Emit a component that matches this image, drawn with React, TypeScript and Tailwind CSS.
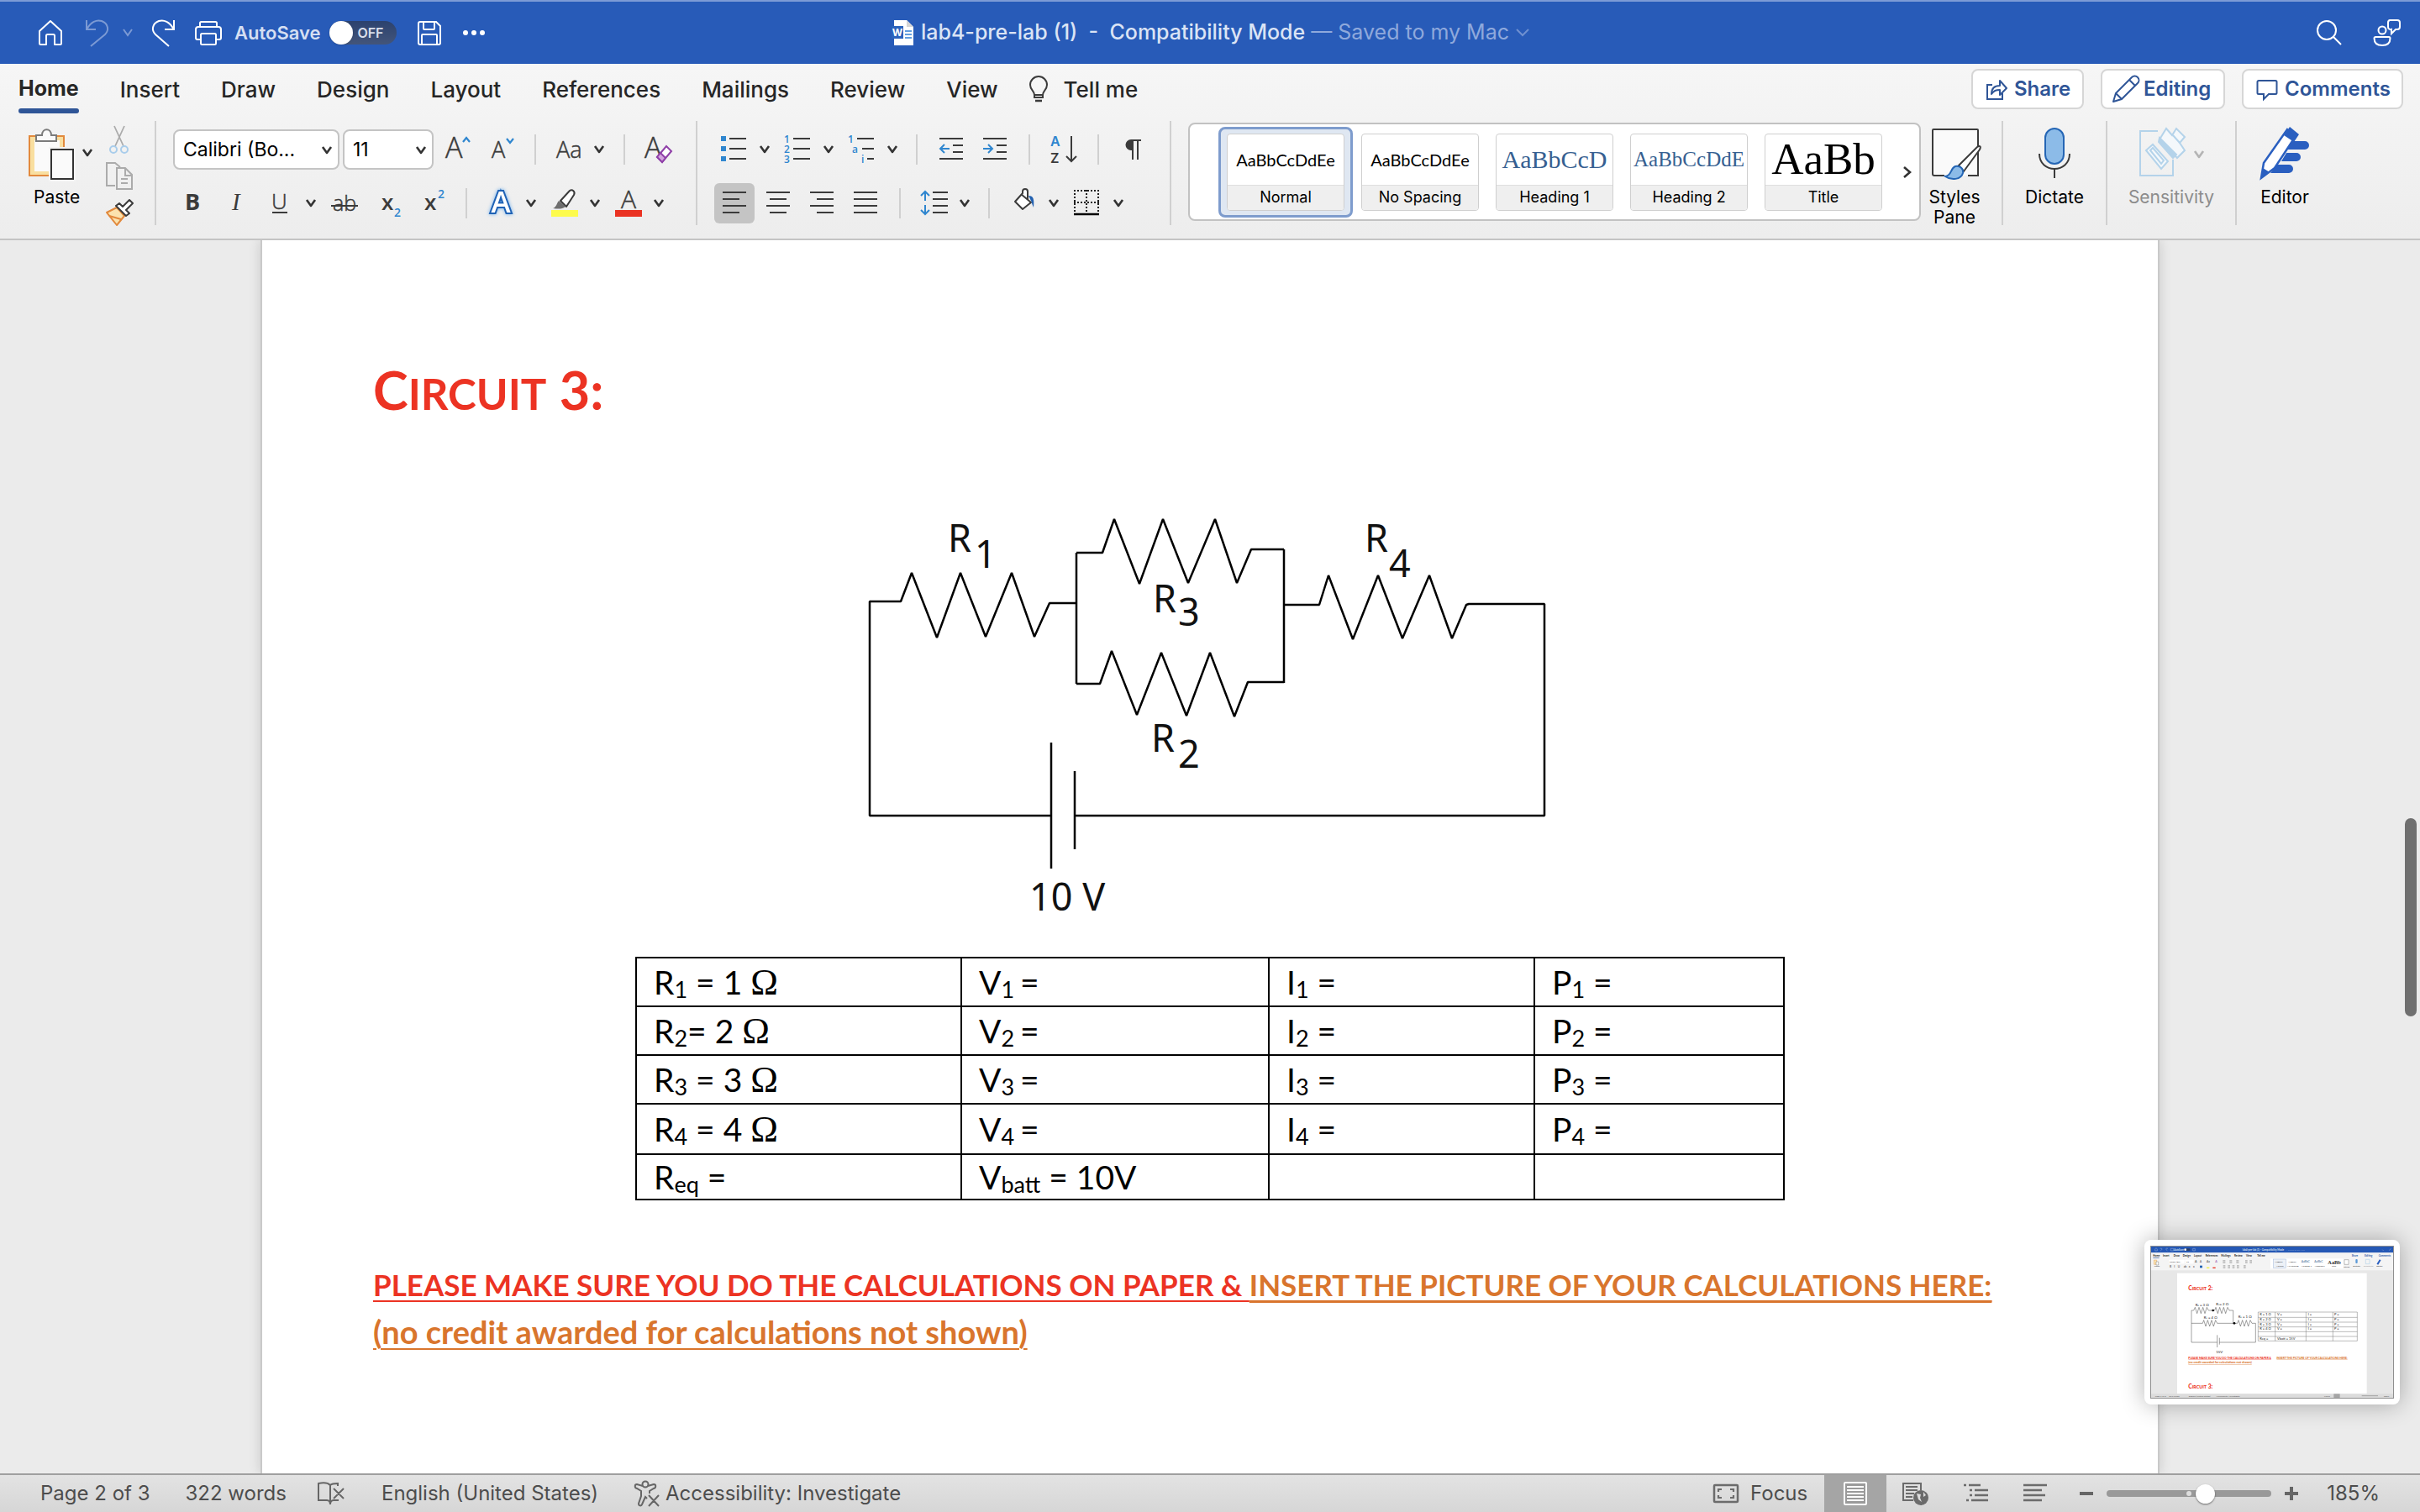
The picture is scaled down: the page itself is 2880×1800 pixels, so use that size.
import type { ReactNode } from 'react';

const INK = '#3b3b3b';
const BLUE = '#2f86cf';

/* ---------- shared pieces ---------- */

type IconProps = { w: number; h?: number; children: ReactNode; className?: string };

function Icon({ w, h = 48, children, className = '' }: IconProps) {
  return (
    <svg width={w} height={h} viewBox={`0 0 ${w} ${h}`} fill="none" className={`shrink-0 overflow-visible ${className}`} aria-hidden="true">
      {children}
    </svg>
  );
}

function Tool({ label, className = '', children }: { label: string; className?: string; children: ReactNode }) {
  return (
    <button type="button" aria-label={label} className={`flex shrink-0 items-center justify-center ${className}`}>
      {children}
    </button>
  );
}

function Chevron({ color = '#333' }: { color?: string }) {
  return (
    <Icon w={14} h={12}>
      <path d="M2 2l5 7 5-7" stroke={color} strokeWidth="2.6" strokeLinejoin="round" />
    </Icon>
  );
}

function More({ label, className = '' }: { label: string; className?: string }) {
  return (
    <Tool label={label} className={`h-12 ${className}`}>
      <Chevron />
    </Tool>
  );
}

const GroupLine = () => <div className="h-[124px] w-[2px] shrink-0 bg-[#d0d0d0]" />;
const RowLine = ({ className = '' }: { className?: string }) => (
  <div className={`h-9 w-[2px] shrink-0 bg-[#d0d0d0] ${className}`} />
);

/* ---------- title bar ---------- */

function TitleBar() {
  return (
    <header className="grid h-[76px] shrink-0 grid-cols-[1fr_auto_1fr] items-center border-t-2 border-[#7d9bd6] bg-[#285bb8] text-white">
      <div className="flex items-center pl-[44px]">
        <Tool label="Home">
          <Icon w={32} h={32}>
            <path d="M3 14L16 2l13 12v14.5a1.5 1.5 0 0 1-1.5 1.5H21V19.5a1.5 1.5 0 0 0-1.5-1.5h-7a1.5 1.5 0 0 0-1.5 1.5V30H4.5A1.5 1.5 0 0 1 3 28.5z" stroke="#fff" strokeWidth="2" strokeLinejoin="round" />
          </Icon>
        </Tool>
        <Tool label="Undo" className="ml-[25px]">
          <Icon w={30} h={34}>
            <path d="M2 2v11h11M2.5 12.5C7 4 14 1 20 3c8 3 9 11 4 16L7 33" stroke="#7c9ad4" strokeWidth="2" />
          </Icon>
        </Tool>
        <Tool label="Undo history" className="ml-[14px]">
          <Icon w={14} h={12}>
            <path d="M2 2l5 7 5-7" stroke="#7c9ad4" strokeWidth="2" />
          </Icon>
        </Tool>
        <Tool label="Redo" className="ml-[20px]">
          <Icon w={30} h={34}>
            <path d="M28 2v11H17M27.5 12.5C23 4 16 1 10 3c-8 3-9 11-4 16l16 14" stroke="#fff" strokeWidth="2" />
          </Icon>
        </Tool>
        <Tool label="Print" className="ml-[22px]">
          <Icon w={34} h={32}>
            <path d="M7 9V4.5A1.5 1.5 0 0 1 8.5 3h17A1.5 1.5 0 0 1 27 4.5V9M8 24H4a2 2 0 0 1-2-2V12a3 3 0 0 1 3-3h24a3 3 0 0 1 3 3v10a2 2 0 0 1-2 2h-4" stroke="#fff" strokeWidth="2" />
            <rect x="8" y="17" width="18" height="13" rx="1.5" stroke="#fff" strokeWidth="2" />
          </Icon>
        </Tool>
        <label className="ml-[14px] flex items-center text-[22px] font-semibold text-[#d5dff2]">
          AutoSave
          <span className="relative ml-[10px] flex items-center">
            <input
              type="checkbox"
              role="switch"
              className="h-7 w-20 appearance-none rounded-full bg-linear-to-b from-[#2c426e] to-[#43557a] before:block before:size-7 before:rounded-full before:bg-white before:shadow"
            />
            <span className="pointer-events-none absolute right-[15px] text-[16px] font-semibold text-[#d9dfea]">OFF</span>
          </span>
        </label>
        <Tool label="Save" className="ml-[24px]">
          <Icon w={30} h={32}>
            <path d="M4 3h19l5 5v20a2 2 0 0 1-2 2H4a2 2 0 0 1-2-2V5a2 2 0 0 1 2-2z" stroke="#fff" strokeWidth="2" />
            <path d="M8 3v8a1 1 0 0 0 1 1h11a1 1 0 0 0 1-1V3M6 30V19a1 1 0 0 1 1-1h16a1 1 0 0 1 1 1v11" stroke="#fff" strokeWidth="2" />
          </Icon>
        </Tool>
        <Tool label="More commands" className="ml-[24px]">
          <Icon w={28} h={8}>
            <circle cx="4" cy="4" r="3" fill="#fff" />
            <circle cx="14" cy="4" r="3" fill="#fff" />
            <circle cx="24" cy="4" r="3" fill="#fff" />
          </Icon>
        </Tool>
      </div>

      <div className="flex items-center whitespace-pre text-[25px] font-medium text-[#dbe4f5]">
        <Icon w={28} h={30}>
          <path d="M4 0h15l8 8v22H4z" fill="#fff" />
          <path d="M19 0v8h8z" fill="#d5d5d5" />
          <path d="M17 13h8M17 17h8M17 21h8" stroke="#2f7fd6" strokeWidth="1.5" />
          <rect x="1" y="7" width="14" height="15" fill="#2b63bd" />
          <text x="8" y="19" textAnchor="middle" fontSize="12" fontWeight="700" fill="#fff">W</text>
        </Icon>
        <h1 className="ml-2">lab4-pre-lab (1)  -  Compatibility Mode</h1>
        <button type="button" className="flex items-center gap-2 font-normal text-[#8fa9dc]">
          <span> — Saved to my Mac</span>
          <Icon w={16} h={10}>
            <path d="M1 1l7 7 7-7" stroke="#6f90d0" strokeWidth="2" />
          </Icon>
        </button>
      </div>

      <div className="flex items-center justify-end gap-[36px] pr-[22px]">
        <Tool label="Search">
          <Icon w={32} h={32}>
            <circle cx="13" cy="13" r="11" stroke="#fff" strokeWidth="2" />
            <path d="M21 21l9 9" stroke="#fff" strokeWidth="2" />
          </Icon>
        </Tool>
        <Tool label="Feedback">
          <Icon w={34} h={34}>
            <circle cx="11" cy="14" r="4.5" stroke="#fff" strokeWidth="2" />
            <path d="M3 22h16a1.5 1.5 0 0 1 1.5 1.5C20.5 29 17 32 11 32S1.5 29 1.5 23.5A1.5 1.5 0 0 1 3 22z" stroke="#fff" strokeWidth="2" />
            <path d="M20 2h9a3 3 0 0 1 3 3v5a3 3 0 0 1-3 3h-2l-5 5v-5a3 3 0 0 1-4-3V5a3 3 0 0 1 2-3z" stroke="#fff" strokeWidth="2" />
          </Icon>
        </Tool>
      </div>
    </header>
  );
}

/* ---------- tabs ---------- */

const tabs = ['Insert', 'Draw', 'Design', 'Layout', 'References', 'Mailings', 'Review', 'View'];

function Tabs() {
  return (
    <nav className="flex h-[60px] items-center pl-[22px] pr-5 text-[26px] font-medium text-[#262626]">
      <div className="flex gap-[49px]">
        <button type="button" className="relative text-[25px] font-bold">
          Home
          <span className="absolute inset-x-0 -bottom-[9px] h-[6px] rounded-full bg-[#2f5597]" />
        </button>
        {tabs.map((tab) => (
          <button key={tab} type="button">{tab}</button>
        ))}
      </div>
      <button type="button" className="ml-[36px] flex items-center gap-[18px]">
        <Icon w={24} h={32}>
          <path d="M7 23c0-5-5-6-5-12a10 10 0 0 1 20 0c0 6-5 7-5 12v3H7zM7 23h10" stroke={INK} strokeWidth="2" />
          <path d="M8 30h8" stroke={INK} strokeWidth="2.5" />
        </Icon>
        Tell me
      </button>
      <div className="ml-auto flex gap-5 text-[24px] font-semibold text-[#2f5597]">
        <button type="button" className="flex h-12 w-[134px] items-center gap-2 rounded-lg border-2 border-[#d6d6d6] bg-white pl-[15px]">
          <Icon w={26} h={28}>
            <path d="M8 9H2v17h18v-7" stroke="#2f5597" strokeWidth="2" />
            <path d="M7 20c0-7 4-10 10-10V4l8 9-8 8v-6c-5 0-7 1-10 5z" stroke="#2f5597" strokeWidth="2" strokeLinejoin="round" />
          </Icon>
          Share
        </button>
        <button type="button" className="flex h-12 w-[148px] items-center gap-1 rounded-lg border-2 border-[#d6d6d6] bg-white pl-[11px]">
          <Icon w={34} h={34}>
            <path d="M2 32l3-10L24 3a4.500 4.500 0 0 1 7 7L12 29zM5 22l7 7M21 6l7 7" stroke="#2f5597" strokeWidth="2" strokeLinejoin="round" />
          </Icon>
          Editing
        </button>
        <button type="button" className="flex h-12 w-[192px] items-center gap-[8px] rounded-lg border-2 border-[#d6d6d6] bg-white pl-[15px]">
          <Icon w={26} h={28}>
            <path d="M3 4h20a1.5 1.5 0 0 1 1.5 1.5v13A1.5 1.5 0 0 1 23 20h-8l-6 6v-6H3a1.5 1.5 0 0 1-1.5-1.5v-13A1.5 1.5 0 0 1 3 4z" stroke="#2f5597" strokeWidth="2" />
          </Icon>
          Comments
        </button>
      </div>
    </nav>
  );
}

/* ---------- ribbon groups ---------- */

function ClipboardGroup() {
  return (
    <div className="flex h-[124px] w-[184px] shrink-0 pl-[34px]">
      <div className="flex w-[78px] flex-col items-start">
        <div className="flex items-center">
          <Tool label="Paste" className="mt-2">
            <Icon w={56} h={64}>
              <rect x="1" y="10" width="41" height="47" fill="#f9dfa0" stroke="#e2893c" strokeWidth="2" />
              <rect x="7" y="15" width="30" height="37" fill="#fafafa" />
              <path d="M9 16V9h7c0-9 11-9 11 0h6v7z" fill="#fafafa" stroke="#7b7b7b" strokeWidth="2" />
              <rect x="24" y="23" width="32" height="41" fill="#f4f4f4" />
              <rect x="27" y="26" width="26" height="35" fill="#fafafa" stroke="#333" strokeWidth="2" />
            </Icon>
          </Tool>
          <Tool label="Paste options" className="ml-[7px] mt-1">
            <Chevron />
          </Tool>
        </div>
        <span className="ml-[6px] mt-[7px] text-[21px] leading-6 text-black">Paste</span>
      </div>
      <div className="ml-[13px] flex flex-col gap-[10px] pt-[5px]">
        <Tool label="Cut">
          <Icon w={34} h={34}>
            <path d="M11 1l11 24M23 1L12 25" stroke="#ababab" strokeWidth="1.8" />
            <circle cx="10" cy="29" r="4" stroke="#a9cdeb" strokeWidth="2" />
            <circle cx="23" cy="29" r="4" stroke="#a9cdeb" strokeWidth="2" />
          </Icon>
        </Tool>
        <Tool label="Copy">
          <Icon w={34} h={34}>
            <path d="M12 28H2V1h10l6 5M14 7h10l8 8v17H14zM24 7v9h8M19 20h8M19 25h8" stroke="#ababab" strokeWidth="2" />
          </Icon>
        </Tool>
        <Tool label="Format Painter">
          <Icon w={34} h={34}>
            <path d="M2 16l12-6 9 10-9 11z" fill="#fbe3ae" stroke="#e2893c" strokeWidth="2" strokeLinejoin="round" />
            <path d="M5 20l14 4" stroke="#e2893c" strokeWidth="2" />
            <path d="M13 8l4-3 4 4 8-8 4 4-8 8 4 4-4 3z" fill="#fff" stroke={INK} strokeWidth="2" strokeLinejoin="round" />
          </Icon>
        </Tool>
      </div>
    </div>
  );
}

function Picker({ label, value, className }: { label: string; value: string; className: string }) {
  return (
    <div className={`relative h-12 shrink-0 ${className}`}>
      <select aria-label={label} className="size-full appearance-none rounded-lg border-2 border-[#c4c4c4] bg-white pl-[10px] text-[23px] text-black">
        <option>{value}</option>
      </select>
      <span className="pointer-events-none absolute right-[8px] top-[19px]">
        <Chevron />
      </span>
    </div>
  );
}

function FontGroup() {
  return (
    <div className="flex h-[124px] w-[642px] shrink-0 flex-col gap-4 pl-[20px] pt-[10px]">
      <div className="flex items-center">
        <Picker label="Font" value="Calibri (Bo..." className="w-[198px]" />
        <Picker label="Font size" value="11" className="ml-1 w-[108px]" />
        <Tool label="Increase font size" className="ml-[14px]">
          <Icon w={32}>
            <text x="0" y="34" fontSize="34" fontFamily="Open Sans" fontWeight="300" fill={INK} stroke={INK} strokeWidth="0.5">A</text>
            <path d="M21 15l4-5 4 5" stroke={BLUE} strokeWidth="2.2" />
          </Icon>
        </Tool>
        <Tool label="Decrease font size" className="ml-[23px]">
          <Icon w={30}>
            <text x="0" y="34" fontSize="27" fontFamily="Open Sans" fontWeight="300" fill={INK} stroke={INK} strokeWidth="0.5">A</text>
            <path d="M18 11l4 5 4-5" stroke={BLUE} strokeWidth="2.2" />
          </Icon>
        </Tool>
        <RowLine className="ml-[21px]" />
        <Tool label="Change case" className="ml-[24px]">
          <Icon w={34}>
            <text x="0" y="34" fontSize="27" fontFamily="Open Sans" fontWeight="300" fill={INK} stroke={INK} strokeWidth="0.5">Aa</text>
          </Icon>
        </Tool>
        <More label="Case options" className="ml-[10px]" />
        <RowLine className="ml-[22px]" />
        <Tool label="Clear formatting" className="ml-[23px]">
          <Icon w={34}>
            <text x="0" y="34" fontSize="34" fontFamily="Open Sans" fontWeight="300" fill={INK} stroke={INK} strokeWidth="0.5">A</text>
            <path d="M15 33L26 20l6 6-11 13z" fill="#fff" stroke="#8f3fa8" strokeWidth="2" />
            <path d="M15 33l4-5 6 6-4 5z" fill="#d3a5de" stroke="#8f3fa8" strokeWidth="2" />
          </Icon>
        </Tool>
      </div>

      <div className="flex items-center">
        <Tool label="Bold" className="ml-[14px]">
          <Icon w={20}>
            <text x="0" y="32" fontSize="27" fontFamily="Open Sans" fontWeight="700" fill={INK}>B</text>
          </Icon>
        </Tool>
        <Tool label="Italic" className="ml-[34px]">
          <Icon w={20}>
            <text x="2" y="32" fontSize="29" fontFamily="Liberation Serif" fontStyle="italic" fill={INK}>I</text>
          </Icon>
        </Tool>
        <Tool label="Underline" className="ml-[28px]">
          <Icon w={22}>
            <text x="1" y="31" fontSize="26" fontFamily="Open Sans" fontWeight="300" fill={INK} stroke={INK} strokeWidth="0.5">U</text>
            <path d="M2 35h18" stroke={INK} strokeWidth="2" />
          </Icon>
        </Tool>
        <More label="Underline options" className="ml-[19px]" />
        <Tool label="Strikethrough" className="ml-[16px]">
          <Icon w={34}>
            <text x="3" y="33" fontSize="25" fontFamily="Open Sans" fontWeight="300" fill={INK} stroke={INK} strokeWidth="0.5">ab</text>
            <path d="M1 27h32" stroke={INK} strokeWidth="2" />
          </Icon>
        </Tool>
        <Tool label="Subscript" className="ml-[27px]">
          <Icon w={24}>
            <text x="0" y="32" fontSize="26" fontFamily="Open Sans" fontWeight="600" fill={INK}>x</text>
            <text x="15" y="40" fontSize="14" fontFamily="Open Sans" fontWeight="600" fill={BLUE}>2</text>
          </Icon>
        </Tool>
        <Tool label="Superscript" className="ml-[27px]">
          <Icon w={26}>
            <text x="0" y="32" fontSize="26" fontFamily="Open Sans" fontWeight="600" fill={INK}>x</text>
            <text x="16" y="18" fontSize="14" fontFamily="Open Sans" fontWeight="600" fill={BLUE}>2</text>
          </Icon>
        </Tool>
        <RowLine className="ml-[23px]" />
        <Tool label="Text effects" className="ml-[23px]">
          <Icon w={34}>
            <text
              x="17"
              y="35"
              textAnchor="middle"
              fontSize="35"
              fontFamily="Open Sans"
              fontWeight="600"
              fill="#fff"
              stroke="#1f62b5"
              strokeWidth="4"
              paintOrder="stroke"
              className="drop-shadow-[0_0_2px_#6fb0ee]"
            >
              A
            </text>
          </Icon>
        </Tool>
        <More label="Effect options" className="ml-[12px]" />
        <Tool label="Highlight" className="ml-[16px]">
          <Icon w={34}>
            <path d="M12 21L23 9c3-2 7 1 5 5l-9 14z" fill="#fff" stroke={INK} strokeWidth="2" strokeLinejoin="round" />
            <path d="M3 30c4-1 5-7 7-9l8 7c-4 3-8 3-15 2z" fill="#6e6e6e" />
            <rect x="1" y="32" width="32" height="8" fill="#fdfb4d" />
          </Icon>
        </Tool>
        <More label="Highlight options" className="ml-[12px]" />
        <Tool label="Font color" className="ml-[16px]">
          <Icon w={34}>
            <text x="17" y="30" textAnchor="middle" fontSize="30" fontFamily="Open Sans" fontWeight="300" fill={INK} stroke={INK} strokeWidth="0.5">A</text>
            <rect x="1" y="32" width="32" height="8" fill="#ea3323" />
          </Icon>
        </Tool>
        <More label="Color options" className="ml-[12px]" />
      </div>
    </div>
  );
}

function ParagraphGroup() {
  return (
    <div className="flex h-[124px] w-[562px] shrink-0 flex-col gap-4 pt-[10px]">
      <div className="flex items-center">
        <Tool label="Bullets" className="ml-[27px]">
          <Icon w={32}>
            <path d="M11 11h20M11 23h20M11 35h20" stroke={INK} strokeWidth="2" />
            <path d="M1 8h6v6H1zM1 20h6v6H1zM1 32h6v6H1z" fill={BLUE} />
          </Icon>
        </Tool>
        <More label="Bullet options" className="ml-[14px]" />
        <Tool label="Numbering" className="ml-[16px]">
          <Icon w={32}>
            <path d="M11 11h20M11 23h20M11 35h20" stroke={INK} strokeWidth="2" />
            <g fontSize="12" fontWeight="600" fontFamily="Open Sans" fill={BLUE}>
              <text x="0" y="16">1</text>
              <text x="0" y="28">2</text>
              <text x="0" y="40">3</text>
            </g>
          </Icon>
        </Tool>
        <More label="Numbering options" className="ml-[14px]" />
        <Tool label="Multilevel list" className="ml-[16px]">
          <Icon w={32}>
            <path d="M11 11h20M17 23h14M23 35h8" stroke={INK} strokeWidth="2" />
            <g fontSize="12" fontWeight="600" fontFamily="Open Sans" fill={BLUE}>
              <text x="0" y="16">1</text>
              <text x="5" y="28">a</text>
              <text x="16" y="40">i</text>
            </g>
          </Icon>
        </Tool>
        <More label="Multilevel options" className="ml-[14px]" />
        <RowLine className="ml-[21px]" />
        <Tool label="Decrease indent" className="ml-[24px]">
          <Icon w={32}>
            <path d="M2 11h28M18 19h12M18 27h12M2 35h28" stroke={INK} strokeWidth="2" />
            <path d="M3 23h11M8 18l-5 5 5 5" stroke={BLUE} strokeWidth="2" />
          </Icon>
        </Tool>
        <Tool label="Increase indent" className="ml-[21px]">
          <Icon w={32}>
            <path d="M1 11h28M17 19h12M17 27h12M1 35h28" stroke={INK} strokeWidth="2" />
            <path d="M1 23h11M7 18l5 5-5 5" stroke={BLUE} strokeWidth="2" />
          </Icon>
        </Tool>
        <RowLine className="ml-[23px]" />
        <Tool label="Sort" className="ml-[23px]">
          <Icon w={34}>
            <text x="1" y="20" fontSize="16" fontFamily="Inter" fontWeight="600" fill={BLUE}>A</text>
            <text x="1" y="40" fontSize="16" fontFamily="Inter" fontWeight="600" fill={INK}>Z</text>
            <path d="M26 8v30M20 32l6 6 6-6" stroke={INK} strokeWidth="2" />
          </Icon>
        </Tool>
        <RowLine className="ml-[23px]" />
        <Tool label="Show formatting marks" className="ml-[28px]">
          <Icon w={24}>
            <path d="M10 13h12M12 12v24M18 12v24" stroke={INK} strokeWidth="2" />
            <path d="M12 12v13h-2a6.5 6.5 0 0 1 0-13z" fill={INK} />
          </Icon>
        </Tool>
      </div>

      <div className="flex items-center">
        <Tool label="Align left" className="ml-[20px] size-12 rounded-md bg-[#c4c4c4]">
          <Icon w={28}>
            <path d="M0 11h28M0 19h20M0 27h28M0 35h20" stroke={INK} strokeWidth="2" />
          </Icon>
        </Tool>
        <Tool label="Align center" className="ml-1 size-12">
          <Icon w={28}>
            <path d="M0 11h28M4 19h20M0 27h28M4 35h20" stroke={INK} strokeWidth="2" />
          </Icon>
        </Tool>
        <Tool label="Align right" className="ml-1 size-12">
          <Icon w={28}>
            <path d="M0 11h28M8 19h20M0 27h28M8 35h20" stroke={INK} strokeWidth="2" />
          </Icon>
        </Tool>
        <Tool label="Justify" className="ml-1 size-12">
          <Icon w={28}>
            <path d="M0 11h28M0 19h28M0 27h28M0 35h28" stroke={INK} strokeWidth="2" />
          </Icon>
        </Tool>
        <RowLine className="ml-[16px]" />
        <Tool label="Line spacing" className="ml-[23px]">
          <Icon w={34}>
            <path d="M15 11h18M15 19h18M15 27h18M15 35h18" stroke={INK} strokeWidth="2" />
            <path d="M6 10v11M1 15l5-5 5 5M6 26v11M1 32l5 5 5-5" stroke={BLUE} strokeWidth="2" />
          </Icon>
        </Tool>
        <More label="Spacing options" className="ml-[12px]" />
        <RowLine className="ml-[21px]" />
        <Tool label="Shading" className="ml-[27px]">
          <Icon w={30}>
            <path d="M10 13l12 10-10 8-9-9 9-10V10a3 3 0 0 1 6 0v10" fill="#fff" stroke={INK} strokeWidth="2" strokeLinejoin="round" />
            <path d="M19 15c6 0 7 4 6 14-2-4-2-6-3-8z" fill="#2361b0" />
          </Icon>
        </Tool>
        <More label="Shading options" className="ml-[12px]" />
        <Tool label="Borders" className="ml-[16px]">
          <Icon w={32}>
            <path d="M1 9h30M1 23h30M2 8v30M16 8v30M30 8v30" stroke="#222" strokeWidth="2" strokeDasharray="2 2" />
            <path d="M1 37h30" stroke="#000" strokeWidth="2.5" />
          </Icon>
        </Tool>
        <More label="Border options" className="ml-[15px]" />
      </div>
    </div>
  );
}

const styleTiles = [
  { name: 'Normal', sample: 'AaBbCcDdEe', look: "font-['Lato',sans-serif] text-[20px] text-black" },
  { name: 'No Spacing', sample: 'AaBbCcDdEe', look: "font-['Lato',sans-serif] text-[20px] text-black" },
  { name: 'Heading 1', sample: 'AaBbCcD', look: "font-['Liberation_Serif',serif] text-[30px] text-[#365f91]" },
  { name: 'Heading 2', sample: 'AaBbCcDdE', look: "font-['Liberation_Serif',serif] text-[25px] text-[#365f91]" },
  { name: 'Title', sample: 'AaBb', look: "font-['Liberation_Serif',serif] text-[53px] text-black" },
];

function StyleGallery() {
  return (
    <div className="ml-[20px] mt-[2px] flex h-[117px] min-w-0 flex-1 items-center overflow-hidden rounded-lg border-2 border-[#c2c2c2] bg-white pl-[34px]">
      {styleTiles.map((tile, i) => (
        <button
          key={tile.name}
          type="button"
          className={`flex h-[108px] w-40 shrink-0 items-center justify-center rounded-lg border-[3px] ${i === 0 ? 'border-[#7e9ccd] bg-[#dfe7f2]' : 'border-transparent'}`}
        >
          <span className="flex h-[92px] w-[140px] flex-col overflow-hidden rounded-[4px] border border-[#cfcfcf] bg-white">
            <span className={`flex flex-1 items-center justify-center leading-none ${tile.look}`}>{tile.sample}</span>
            <span className="h-[30px] border-t border-[#dedede] bg-[#efefef] text-[18px] leading-[27px] text-black">{tile.name}</span>
          </span>
        </button>
      ))}
      <Tool label="More styles" className="ml-auto pr-[8px]">
        <Icon w={12} h={16}>
          <path d="M2 2l7 6-7 6" stroke="#333" strokeWidth="2.6" />
        </Icon>
      </Tool>
    </div>
  );
}

function BigTools() {
  return (
    <div className="flex shrink-0 text-[21px] leading-6 text-black">
      <button type="button" className="mr-3 flex w-[84px] flex-col items-center gap-[7px] pt-2">
        <Icon w={60} h={64}>
          <path d="M44 57h12V3a1 1 0 0 0-1-1H3a1 1 0 0 0-1 1v52a2 2 0 0 0 2 2h12" fill="#fafafa" stroke={INK} strokeWidth="2" />
          <path d="M33 45L55 23c3-2 5-1 3 3L39 52z" fill="#fff" stroke={INK} strokeWidth="2" />
          <path d="M17 58c8-1 6-10 12-12 6-1 10 3 9 8-2 8-14 9-21 4z" fill="#8cbbe8" stroke="#2566b5" strokeWidth="2" />
        </Icon>
        <span className="-ml-1 w-[70px]">Styles Pane</span>
      </button>
      <GroupLine />
      <button type="button" className="flex w-[122px] flex-col items-center gap-[7px] pt-2">
        <Icon w={42} h={64}>
          <rect x="10" y="1" width="22" height="42" rx="11" fill="#8cbbe8" stroke="#2566b5" strokeWidth="2" />
          <path d="M3 31c0 24 36 24 36 0M21 49v11" stroke={INK} strokeWidth="2" />
        </Icon>
        Dictate
      </button>
      <GroupLine />
      <button type="button" disabled className="flex w-[152px] flex-col items-center gap-[7px] pt-2 text-[#8c8c8c]">
        <span className="flex items-center gap-2">
          <Icon w={58} h={64}>
            <path d="M24 4H3v53h39V38" stroke="#b4d3ea" strokeWidth="2" />
            <path d="M10 27l8-7 18 20-8 9zM15 27l3-3 13 15-3 4z" fill="#f4f8fb" stroke="#b4d3ea" strokeWidth="2" />
            <path d="M26 14l8-13 7 8 5-8 10 10-6 7 6 9-9 9z" fill="#f4f8fb" stroke="#b4d3ea" strokeWidth="2" />
            <path d="M42 9l8 9M26 12l20 20-4 4-17-19z" fill="#b4d3ea" stroke="#b4d3ea" strokeWidth="2" />
          </Icon>
          <Chevron color="#b4b4b4" />
        </span>
        Sensitivity
      </button>
      <GroupLine />
      <button type="button" className="mr-[104px] flex w-[114px] flex-col items-center gap-[7px] pt-2">
        <Icon w={62} h={64}>
          <path d="M38 16h17a5 5 0 0 1 0 10H34zM33 30h12a5 5 0 0 1 0 10H27zM22 44h14a5 5 0 0 1 0 10H14z" fill="#2a5fc0" />
          <path d="M3 60L6 42 34 2l10 8-25 38z" fill="#fff" stroke="#2a5fc0" strokeWidth="2.5" />
          <path d="M3 60l2-12 8 5zM30 9l7-10 11 9-6 9z" fill="#2a5fc0" />
        </Icon>
        Editor
      </button>
    </div>
  );
}

/* ---------- document ---------- */

const wire =
  'M251 391H35V136h37L85 102l30 77 28-77 30 76 31-76 27 76 18-40h32' +
  'M281 78v156M528 74v159' +
  'M281 78h31l14-40 30 77 28-77 30 76 32-76 26 76 17-40h39' +
  'M281 234h28l14-39 30 76 29-74 30 75 28-75 29 76 16-41h43' +
  'M528 140h42l11-35 29 76 30-76 29 75 32-75 27 75 17-40 3-1h90v252H279' +
  'M251 304v150M279 338v93';

function Circuit() {
  return (
    <svg viewBox="0 0 880 559" className="mx-auto w-[880px]" role="img" aria-label="Circuit 3">
      <path d={wire} fill="none" stroke="#000" strokeWidth="2.5" strokeLinejoin="bevel" />
      <g fontFamily="Noto Sans, sans-serif" fontSize="45" fill="#111">
        <text x="128" y="77">R</text>
        <text x="160" y="96">1</text>
        <text x="624" y="77">R</text>
        <text x="653" y="107">4</text>
        <text x="372" y="149">R</text>
        <text x="402" y="165">3</text>
        <text x="370" y="315">R</text>
        <text x="402" y="334">2</text>
        <text x="225" y="504">10 V</text>
      </g>
    </svg>
  );
}

const Sub = ({ children }: { children: ReactNode }) => (
  <sub className="bottom-[-4px] text-[27px] leading-none">{children}</sub>
);

const ohms = [
  { n: 1, gap: ' ', height: 'h-[58px]' },
  { n: 2, gap: '', height: 'h-[58px]' },
  { n: 3, gap: ' ', height: 'h-[58px]' },
  { n: 4, gap: ' ', height: 'h-[60px]' },
];

function ValuesTable() {
  return (
    <table className="mx-auto w-[1368px] table-fixed border-collapse whitespace-pre text-[39px] leading-[46px] text-black [&_td]:border-2 [&_td]:border-black [&_td]:px-[20px] [&_td]:py-0">
      <colgroup>
        <col className="w-[387px]" />
        <col className="w-[366px]" />
        <col className="w-[316px]" />
        <col />
      </colgroup>
      <tbody>
        {ohms.map(({ n, gap, height }) => (
          <tr key={n} className={height}>
            <td>
              R<Sub>{n}</Sub>{gap}= {n} <span className="font-['Liberation_Serif',serif] text-[44px] leading-none">Ω</span>
            </td>
            <td>V<Sub>{n} </Sub>=</td>
            <td>I<Sub>{n}</Sub> =</td>
            <td>P<Sub>{n}</Sub> =</td>
          </tr>
        ))}
        <tr className="h-[54px]">
          <td>R<Sub>eq</Sub> =</td>
          <td>V<Sub>batt</Sub> = 10V</td>
          <td />
          <td />
        </tr>
      </tbody>
    </table>
  );
}

/* floating preview of the previous capture */
function Preview() {
  return (
    <aside className="absolute bottom-[82px] right-[24px] rounded-lg bg-white p-2 shadow-[0_0_28px_rgba(0,0,0,0.3)]">
      <svg width="288" height="180" viewBox="0 0 864 540" className="outline outline-[#8f8f8f]" fontFamily="Lato, sans-serif">
        <rect width="864" height="540" fill="#e7e7e7" />
        <rect width="864" height="22" fill="#2558b5" />
        <rect y="22" width="864" height="63" fill="#f4f4f4" />
        <g fontSize="10" fill="#d7e0f2" fontWeight="700">
          <text x="82" y="15" fontSize="8">AutoSave</text>
          <text x="326" y="15" fontSize="9">lab4-pre-lab (1) - Compatibility Mode</text>
          <text x="480" y="15" fontSize="8" fill="#7f9bd2" fontWeight="400">— Saved to my Mac</text>
          <path d="M14 15V9l4-4 4 4v6zM32 7c8-3 9 3 2 8M60 7c-8-3-9 3-2 8M70 7h10v8H70zM149 7h8v8h-8zM830 15l-4-4M850 14l6-7" fill="none" stroke="#d7e0f2" />
          <rect x="118" y="7" width="22" height="8" rx="4" fill="#2b3f68" />
          <circle cx="122" cy="11" r="4" fill="#fff" />
        </g>
        <g fontSize="9" fill="#222" fontWeight="700">
          <text x="7" y="35">Home</text>
          <text x="42" y="35">Insert</text>
          <text x="80" y="35">Draw</text>
          <text x="113" y="35">Design</text>
          <text x="153" y="35">Layout</text>
          <text x="194" y="35">References</text>
          <text x="250" y="35">Mailings</text>
          <text x="297" y="35">Review</text>
          <text x="339" y="35">View</text>
          <text x="379" y="35">Tell me</text>
          <g fill="#2f5ca8">
            <text x="716" y="36">Share</text>
            <text x="762" y="36">Editing</text>
            <text x="812" y="36">Comments</text>
          </g>
          <rect x="7" y="39" width="22" height="2" fill="#2f5597" />
        </g>
        <rect x="64" y="47" width="55" height="14" rx="2" fill="#fff" />
        <rect x="122" y="47" width="30" height="14" rx="2" fill="#fff" />
        <rect x="426" y="43" width="260" height="36" fill="#fff" />
        <rect x="436" y="45" width="46" height="32" fill="#edf1f7" stroke="#7e9ccd" />
        <g fontSize="8" fill="#333">
          <text x="66" y="57">Calibri (Bo...</text>
          <text x="126" y="57">11</text>
          <text x="156" y="57" fontSize="11">A</text>
          <text x="174" y="57" fontSize="9">A</text>
          <text x="198" y="57" fontSize="10">Aa</text>
          <text x="229" y="57" fontSize="11" fill="#8f3fa8">A</text>
          <text x="66" y="76" fontSize="10">B</text>
          <text x="82" y="76" fontSize="10">I</text>
          <text x="95" y="76" fontSize="10">U</text>
          <text x="116" y="76" fontSize="10">ab</text>
          <text x="134" y="76" fontSize="10">x</text>
          <text x="150" y="76" fontSize="10">x</text>
          <text x="442" y="58">AaBbCc</text>
          <text x="490" y="58">AaBbCc</text>
          <text x="536" y="58" fill="#365f91" fontSize="10">AaBbC</text>
          <text x="583" y="58" fill="#365f91" fontSize="10">AaBbC</text>
          <text x="631" y="62" fontSize="19" fontFamily="Liberation Serif" fontWeight="700">AaBb</text>
          <text x="447" y="73">Normal</text>
          <text x="487" y="73">No Spacing</text>
          <text x="537" y="73">Heading 1</text>
          <text x="584" y="73">Heading 2</text>
          <text x="645" y="73">Title</text>
          <text x="11" y="72">Paste</text>
          <text x="688" y="76">Styles</text>
          <text x="721" y="72">Dictate</text>
          <text x="758" y="72" fill="#999">Sensitivity</text>
          <text x="805" y="72">Editor</text>
        </g>
        <path d="M10 48h10v16H10z" fill="#fbe3ae" stroke="#e2893c" />
        <path d="M18 54h8v12h-8z" fill="#fff" stroke="#444" />
        <path d="M174 72h9" stroke="#2566b5" strokeWidth="8" />
        <path d="M198 76h10" stroke="#f3ee3f" strokeWidth="4" />
        <path d="M220 76h10" stroke="#ea3323" strokeWidth="4" />
        <path d="M256 50h9m-9 4h9m-9 4h9M280 50h9m-9 4h9m-9 4h9M304 50h9m-9 4h9m-9 4h9M336 50h8m-8 4h8m-8 4h8M352 50h8m-8 4h8m-8 4h8M257 68h8m-8 4h8m-8 4h8M274 68h8m-8 4h8m-8 4h8M290 68h8m-8 4h8m-8 4h8M306 68h8m-8 4h8m-8 4h8M330 68h8m-8 4h8m-8 4h8" stroke="#777" strokeWidth="1.5" />
        <path d="M690 47h15v17h-15z" fill="#fff" stroke="#444" />
        <rect x="730" y="45" width="7" height="15" rx="3" fill="#5b9bd8" />
        <path d="M766 46h14v16h-14z" fill="none" stroke="#b4d3ea" strokeWidth="2" />
        <path d="M808 64l10-17" stroke="#2a5fc0" strokeWidth="6" />
        <rect x="93" y="95" width="677" height="431" fill="#fff" />
        <g fill="#ec3323" fontWeight="900">
          <text x="133" y="155" fontSize="20">C<tspan fontSize="16">IRCUIT</tspan> 2:</text>
          <text x="133" y="507" fontSize="20">C<tspan fontSize="16">IRCUIT</tspan> 3:</text>
          <text x="133" y="401" fontSize="10" textDecoration="underline">PLEASE MAKE SURE YOU DO THE CALCULATIONS ON PAPER &amp; </text>
          <text x="448" y="401" fontSize="10" fill="#d9752d" textDecoration="underline">INSERT THE PICTURE OF YOUR CALCULATIONS HERE:</text>
          <text x="133" y="418" fontSize="11" fill="#d9752d" textDecoration="underline">(no credit awarded for calculations not shown)</text>
        </g>
        <path
          d="M236 342H144V228h8l5-11 7 22 7-22 7 22 7-22 7 22 7-22 6 11h22l4-11 7 22 7-22 7 22 7-22 7 22 7-22 6 11h14v46M144 274h40l4-11 7 22 7-22 7 22 7-22 7 22 7-22 6 11h72l4-11 7 22 7-22 7 22 7-22 7 22 7-22 6 11h13v68H244M236 316v44M244 326v24"
          fill="none"
          stroke="#444"
          strokeWidth="1.5"
        />
        <circle cx="221" cy="228" r="4" />
        <circle cx="297" cy="274" r="4" />
        <path d="M382 234h354v103H382zM382 253h354M382 270h354M382 287h354M382 304h354M382 321h354M443 234v103M553 234v103M649 234v103" fill="none" stroke="#777" strokeWidth="1.5" />
        <g fontSize="13" fill="#222">
          <text x="158" y="212">R₂ = 3 Ω</text>
          <text x="232" y="211">R₃= 2 Ω</text>
          <text x="188" y="259">R₄ = 4 Ω</text>
          <text x="311" y="255">R₁ = 1 Ω</text>
          <text x="232" y="380">15V</text>
          {[1, 2, 3, 4].map((n) => (
            <g key={n} fontSize="12">
              <text x="388" y={230 + n * 17}>R = {n} Ω</text>
              <text x="450" y={230 + n * 17}>V =</text>
              <text x="560" y={230 + n * 17}>I =</text>
              <text x="654" y={230 + n * 17}>P =</text>
            </g>
          ))}
          <text x="388" y="334" fontSize="12">Req =</text>
          <text x="450" y="334" fontSize="12">Vbatt = 15V</text>
        </g>
        <rect y="526" width="864" height="14" fill="#dcdcdc" />
        <g fontSize="8" fill="#555">
          <text x="14" y="536">Page 1 of 3</text>
          <text x="64" y="536">322 words</text>
          <text x="134" y="536">English (United States)</text>
          <text x="232" y="536">Accessibility: Investigate</text>
          <text x="618" y="536">Focus</text>
          <text x="830" y="536">185%</text>
          <rect x="652" y="526" width="22" height="14" fill="#a5a5a5" />
          <path d="M752 533h58" stroke="#888" strokeWidth="2" />
        </g>
      </svg>
    </aside>
  );
}

function Document() {
  return (
    <main className="relative min-h-0 flex-1 overflow-hidden bg-[#ebebeb] px-[310px]">
      <article className="mx-auto h-full w-full max-w-[2260px] border-x-2 border-[#c9c9c9] bg-white px-[132px] pt-[138px] font-['Lato',sans-serif] shadow-[0_0_14px_rgba(0,0,0,0.15)]">
        <h2 className="text-[63px] leading-[80px] font-bold text-[#ec3323]">
          C<span className="text-[51px]">IRCUIT</span> 3:
        </h2>
        <div className="mt-[71px]">
          <Circuit />
        </div>
        <ValuesTable />
        <p className="mt-[72px] text-[35px] leading-[56px] font-bold whitespace-pre text-[#ec3323] underline decoration-2 underline-offset-[5px]">
          PLEASE MAKE SURE YOU DO THE CALCULATIONS ON PAPER &amp; <span className="text-[#d9752d] underline">INSERT THE PICTURE OF YOUR CALCULATIONS HERE:</span>
        </p>
        <p className="text-[38px] leading-[56px] font-bold text-[#d9752d] underline decoration-2 underline-offset-[5px]">
          (no credit awarded for calculations not shown)
        </p>
      </article>
      <div className="absolute right-[4px] top-[688px] h-[236px] w-[14px] rounded-full bg-[#6f6f6f]" />
      <Preview />
    </main>
  );
}

/* ---------- status bar ---------- */

function StatusBar() {
  return (
    <footer className="flex h-[46px] shrink-0 items-center border-t-2 border-[#9f9f9f] bg-linear-to-b from-[#e3e3e3] to-[#d6d6d6] pl-[48px] pr-[48px] text-[24px] text-[#4d4d4d]">
      <button type="button">Page 2 of 3</button>
      <button type="button" className="ml-[42px]">322 words</button>
      <Tool label="Proofing errors" className="ml-[36px]">
        <Icon w={34} h={30}>
          <path d="M16 26V5c-3-3-9-3-14-2v20h10c2 0 4 1 4 5 0-4 2-5 4-5h6M16 5c2-2 5-2 9-2v3M20 9l12 12M32 9L20 21" stroke="#666" strokeWidth="2" />
        </Icon>
      </Tool>
      <button type="button" className="ml-[43px]">English (United States)</button>
      <button type="button" className="ml-[42px] flex items-center gap-[6px]">
        <Icon w={32} h={32}>
          <circle cx="14" cy="5" r="3.5" stroke="#666" strokeWidth="2" />
          <path d="M11 7L4 5c-3 0-3 4 0 5l5 3v6L6 28c0 3 3 3 4 1l4-9 2 2M17 7l7-2c3 0 3 4 0 5l-5 3v3M18 18l12 13M30 18L18 31" stroke="#666" strokeWidth="2" />
        </Icon>
        Accessibility: Investigate
      </button>

      <button type="button" className="ml-auto flex items-center gap-[13px]">
        <Icon w={32} h={24}>
          <rect x="2" y="2" width="28" height="20" rx="1" stroke="#6b6b6b" strokeWidth="2.5" />
          <path d="M7 10V7h4M21 7h4v3M25 14v3h-4M11 17H7v-3" stroke="#6b6b6b" strokeWidth="2.2" />
        </Icon>
        Focus
      </button>
      <Tool label="Print layout" className="ml-[20px] h-11 w-[74px] bg-[#a5a5a5]">
        <Icon w={28} h={28}>
          <rect x="1" y="1" width="26" height="26" rx="1" fill="#9a9a9a" stroke="#fff" strokeWidth="2" />
          <path d="M4 6h20M4 10h20M4 14h20M4 18h20M4 22h20" stroke="#fff" strokeWidth="2" />
        </Icon>
      </Tool>
      <Tool label="Web layout" className="ml-[18px]">
        <Icon w={34} h={30}>
          <path d="M14 23H2V3h21v8" stroke="#6b6b6b" strokeWidth="2" />
          <path d="M5 7h14M5 11h14M5 15h10M5 19h8" stroke="#6b6b6b" strokeWidth="2" />
          <circle cx="23" cy="20" r="9" fill="#6b6b6b" />
          <path d="M18 15l5 1-1 4 2 5-4-3zM26 13l3 4-3 2z" fill="#dcdcdc" />
        </Icon>
      </Tool>
      <Tool label="Outline" className="ml-[38px]">
        <Icon w={32} h={26}>
          <path d="M2 3h3M8 3h14M9 9h3M15 9h16M9 15h3M15 15h16M5 21h3M11 21h20" stroke="#6b6b6b" strokeWidth="2.4" />
        </Icon>
      </Tool>
      <Tool label="Draft" className="ml-[40px]">
        <Icon w={30} h={26}>
          <path d="M1 3h28M1 9h22M1 15h26M1 21h22" stroke="#6b6b6b" strokeWidth="2.4" />
        </Icon>
      </Tool>
      <Tool label="Zoom out" className="ml-[38px]">
        <Icon w={16} h={16}>
          <path d="M0 8h16" stroke="#666" strokeWidth="4" />
        </Icon>
      </Tool>
      <span className="relative ml-[16px] flex items-center">
        <input
          type="range"
          aria-label="Zoom"
          defaultValue={61}
          className="h-2 w-[196px] appearance-none rounded-full bg-[#999] [&::-webkit-slider-thumb]:size-[23px] [&::-webkit-slider-thumb]:appearance-none [&::-webkit-slider-thumb]:rounded-full [&::-webkit-slider-thumb]:bg-white [&::-webkit-slider-thumb]:shadow-[0_1px_2px_rgba(0,0,0,0.5)]"
        />
        <span className="pointer-events-none absolute left-[95px] size-[6px] rounded-full bg-[#dedede]" />
      </span>
      <Tool label="Zoom in" className="ml-[16px]">
        <Icon w={16} h={16}>
          <path d="M0 8h16M8 0v16" stroke="#666" strokeWidth="4" />
        </Icon>
      </Tool>
      <button type="button" className="ml-[34px]">185%</button>
    </footer>
  );
}

export default function App() {
  return (
    <div className="flex h-screen flex-col overflow-hidden font-['Inter',sans-serif]">
      <TitleBar />
      <div className="shrink-0 border-b-2 border-[#c4c4c4] bg-linear-to-b from-[#f6f6f6] to-[#ededed]">
        <Tabs />
        <div className="flex h-[148px] items-start pt-2">
          <ClipboardGroup />
          <GroupLine />
          <FontGroup />
          <GroupLine />
          <ParagraphGroup />
          <GroupLine />
          <StyleGallery />
          <BigTools />
        </div>
      </div>
      <Document />
      <StatusBar />
    </div>
  );
}
